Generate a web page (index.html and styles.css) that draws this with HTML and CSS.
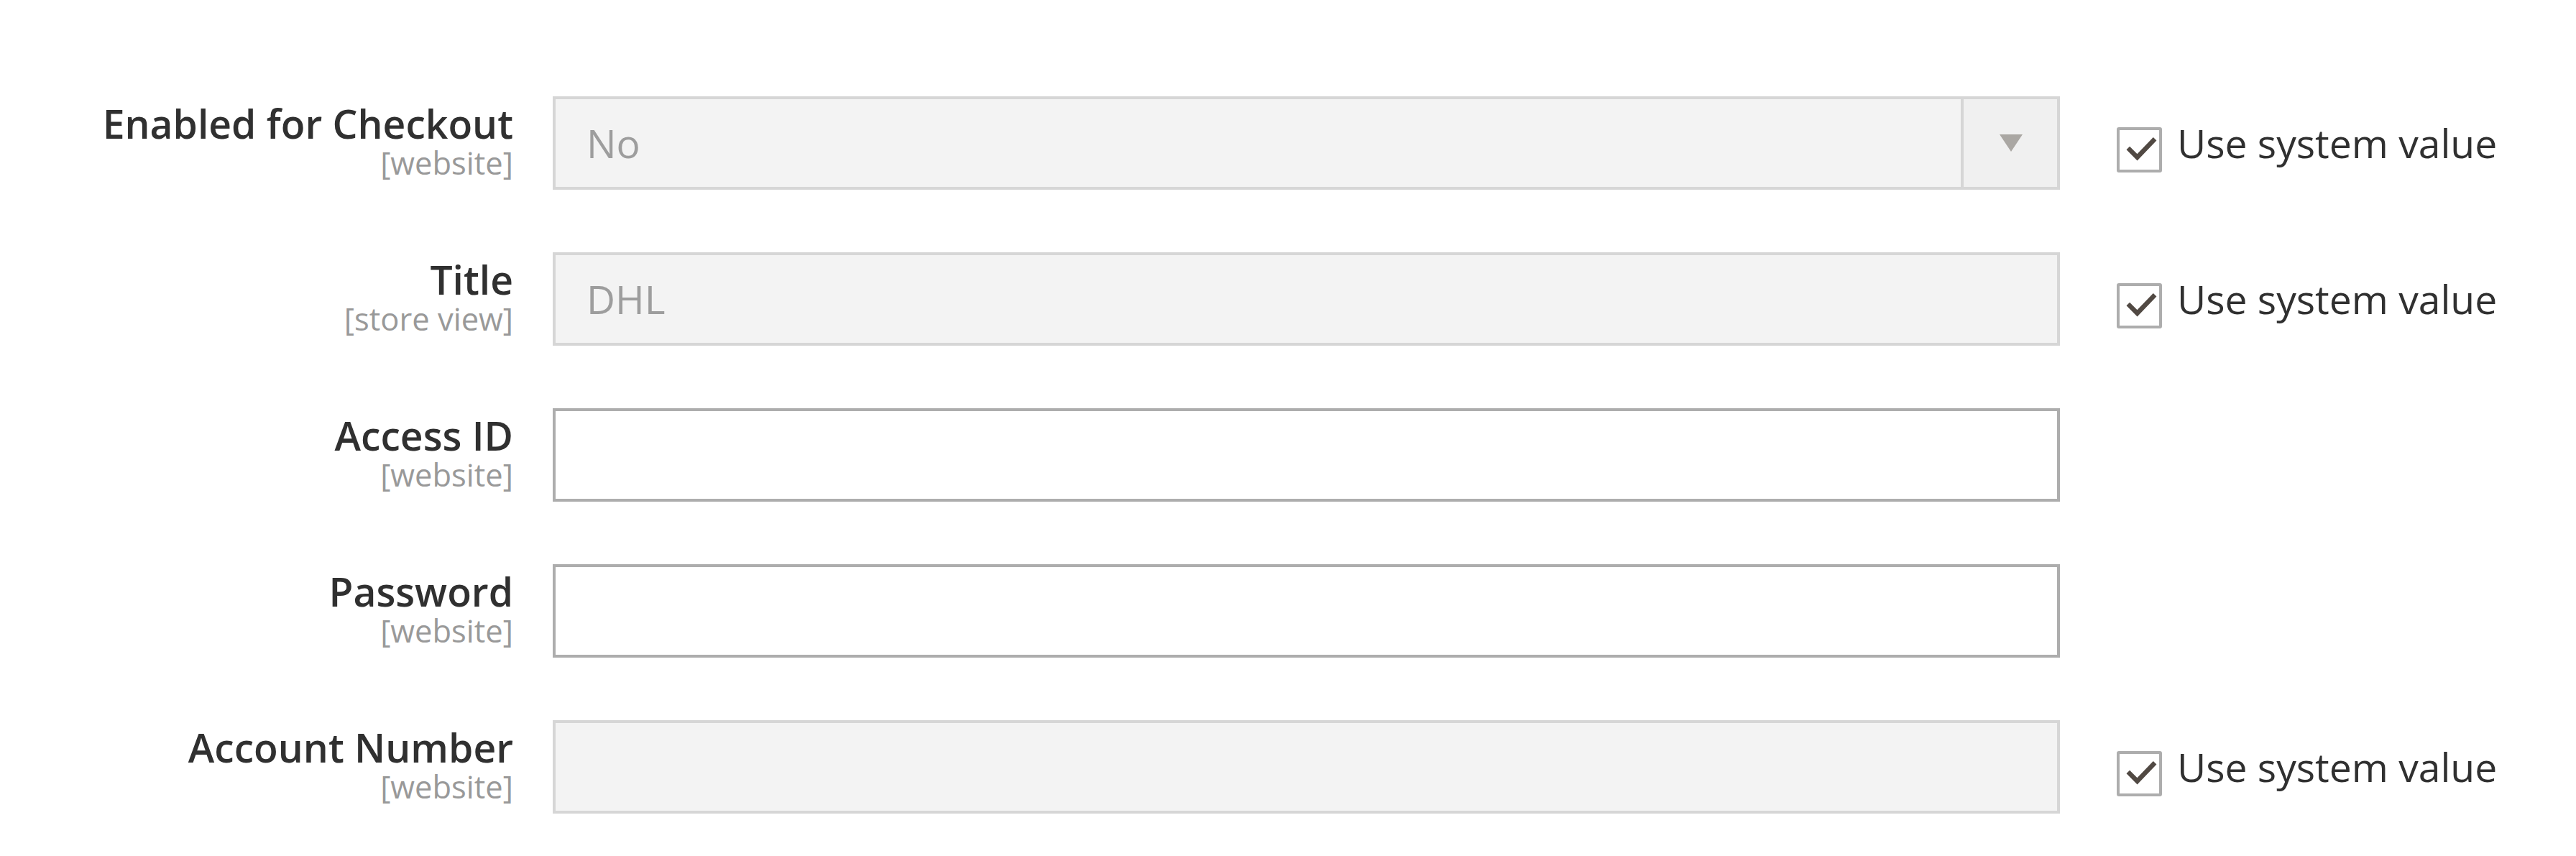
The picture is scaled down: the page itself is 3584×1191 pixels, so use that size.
FILE: index.html
```html
<!DOCTYPE html>
<html lang="en">
<head>
<meta charset="utf-8">
<title>DHL configuration</title>
<link rel="stylesheet" href="styles.css">
</head>
<body>
<form class="config">
  <div class="row">
    <div class="label"><span class="name">Enabled for Checkout</span><span class="scope">[website]</span></div>
    <div class="control select disabled">
      <span class="value">No</span>
      <span class="select-btn"><svg class="arrow" width="32" height="24" viewBox="0 0 32 24"><path d="M0 0H32L16 24Z" fill="#aaa7a3"/></svg></span>
    </div>
    <label class="inherit"><span class="box"><svg width="56" height="56" viewBox="0 0 56 56"><path d="M12 25 L25 38 L50 12" fill="none" stroke="#514943" stroke-width="6.5"/></svg></span><span class="inherit-text">Use system value</span></label>
  </div>
  <div class="row">
    <div class="label"><span class="name">Title</span><span class="scope">[store view]</span></div>
    <div class="control input disabled"><span class="value">DHL</span></div>
    <label class="inherit"><span class="box"><svg width="56" height="56" viewBox="0 0 56 56"><path d="M12 25 L25 38 L50 12" fill="none" stroke="#514943" stroke-width="6.5"/></svg></span><span class="inherit-text">Use system value</span></label>
  </div>
  <div class="row">
    <div class="label"><span class="name">Access ID</span><span class="scope">[website]</span></div>
    <div class="control input"></div>
  </div>
  <div class="row">
    <div class="label"><span class="name">Password</span><span class="scope">[website]</span></div>
    <div class="control input"></div>
  </div>
  <div class="row">
    <div class="label"><span class="name">Account Number</span><span class="scope">[website]</span></div>
    <div class="control input disabled"></div>
    <label class="inherit"><span class="box"><svg width="56" height="56" viewBox="0 0 56 56"><path d="M12 25 L25 38 L50 12" fill="none" stroke="#514943" stroke-width="6.5"/></svg></span><span class="inherit-text">Use system value</span></label>
  </div>
</form>
</body>
</html>
```

FILE: styles.css
```css
html, body {
  margin: 0;
  padding: 0;
  background: #ffffff;
}
body {
  font-family: "Open Sans", "Liberation Sans", sans-serif;
  color: #303030;
  height: 1191px;
  overflow: hidden;
}
.config {
  display: flex;
  flex-direction: column;
  gap: 87px;
  padding-top: 134px;
}
.row {
  display: flex;
  align-items: flex-start;
  height: 130px;
}
.label {
  width: 714px;
  flex: none;
  display: flex;
  flex-direction: column;
  align-items: flex-end;
  text-align: right;
}
.name {
  font-size: 55.2px;
  font-weight: 600;
  line-height: 63px;
  padding-top: 6px;
  color: #303030;
  white-space: nowrap;
}
.scope {
  font-size: 43.5px;
  line-height: 47px;
  color: #999999;
  white-space: nowrap;
}
.control {
  box-sizing: border-box;
  width: 2097px;
  height: 130px;
  margin-left: 55px;
  flex: none;
  border: 4px solid #adadad;
  background: #ffffff;
  display: flex;
  align-items: center;
}
.control.disabled {
  border-color: #d6d6d6;
  background: #f3f3f3;
}
.value {
  flex: 1;
  padding-left: 43px;
  font-size: 55.2px;
  line-height: 74px;
  color: #9d9d9d;
}
.select-btn {
  align-self: stretch;
  width: 130px;
  border-left: 4px solid #d6d6d6;
  background: #f0f0f0;
  display: flex;
  align-items: center;
  justify-content: center;
}
.arrow {
  display: block;
  margin-left: 2px;
}
.inherit {
  display: flex;
  align-items: flex-start;
  margin-left: 79px;
  flex: none;
}
.box {
  box-sizing: border-box;
  width: 63px;
  height: 63px;
  margin-top: 43px;
  border: 4px solid #adadad;
  border-radius: 3px;
  background: #ffffff;
  display: flex;
  align-items: center;
  justify-content: center;
}
.box svg {
  display: block;
}
.inherit-text {
  margin-left: 21px;
  font-size: 55.2px;
  line-height: 74px;
  padding-top: 28px;
  color: #303030;
  white-space: nowrap;
}
```
